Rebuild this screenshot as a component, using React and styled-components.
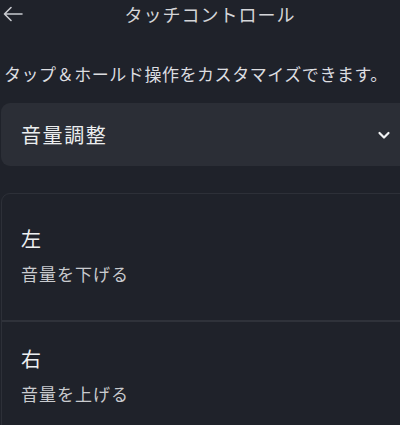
import React from 'react';
import styled, {createGlobalStyle} from 'styled-components';

const GlobalStyle = createGlobalStyle`
	html, body {
		margin: 0;
		padding: 0;
		background: #1f222a;
		overflow: hidden;
	}
	body {
		font-family: "Noto Sans CJK JP", "Noto Sans", sans-serif;
		color: #e2e3e6;
	}
`;

const Page = styled.div`
	width: 400px;
	height: 425px;
	overflow: hidden;
	background: #1f222a;
`;

const Header = styled.div`
	height: 28px;
	display: flex;
	align-items: center;
	justify-content: center;
	position: relative;
	padding-left: 20px;
`;

const BackButton = styled.button`
	position: absolute;
	left: 2px;
	top: 3px;
	padding: 0;
	border: none;
	background: none;
	color: #c8cacf;
	display: flex;
`;

const Title = styled.h1`
	margin: 0;
	font-size: 18px;
	font-weight: 400;
	color: #d4d5d8;
	letter-spacing: 1px;
	line-height: 28px;
`;

const Description = styled.p`
	margin: 33px 0 0 4px;
	font-size: 17px;
	line-height: 26px;
	color: #dcdde0;
	white-space: nowrap;
	letter-spacing: 0.55px;
`;

const Select = styled.div`
	margin: 16px -12px 0 1px;
	height: 63px;
	border-radius: 9px;
	background: #2b2e36;
	display: flex;
	align-items: center;
	padding: 0 21px 0 20px;
	justify-content: space-between;
`;

const SelectLabel = styled.span`
	font-size: 20px;
	color: #eceef0;
	letter-spacing: 1.6px;
`;

const List = styled.div`
	margin: 27px -12px 0 1px;
	padding-top: 8px;
	border: 1px solid #2d3038;
	border-radius: 9px;
`;

const Item = styled.div`
	padding: 24px 20px 34px 19px;
	& + & {
		border-top: 2px solid #2f323a;
	}
`;

const ItemTitle = styled.div`
	font-size: 20px;
	line-height: 26px;
	color: #eef0f2;
`;

const ItemSub = styled.div`
	margin-top: 10px;
	font-size: 17px;
	line-height: 24px;
	color: #c9cbcf;
	letter-spacing: 1px;
`;

const items = [
	{id: 'left', title: '左', sub: '音量を下げる'},
	{id: 'right', title: '右', sub: '音量を上げる'},
];

const App = () => (
	<Page>
		<GlobalStyle />
		<Header>
			<BackButton aria-label="戻る">
				<svg width="22" height="22" viewBox="0 0 22 22" fill="none" stroke="currentColor" strokeWidth="1.6" strokeLinecap="round" strokeLinejoin="round">
					<path d="M20 11H2.5M9 4.5L2.5 11L9 17.5" />
				</svg>
			</BackButton>
			<Title>タッチコントロール</Title>
		</Header>
		<Description>タップ＆ホールド操作をカスタマイズできます。</Description>
		<Select>
			<SelectLabel>音量調整</SelectLabel>
			<svg width="14" height="14" viewBox="0 0 14 14" fill="none" stroke="#f2f3f5" strokeWidth="2.2" strokeLinecap="round" strokeLinejoin="round">
				<path d="M2.5 5l4.5 4.5L11.5 5" />
			</svg>
		</Select>
		<List>
			{items.map(item =>
				<Item key={item.id}>
					<ItemTitle>{item.title}</ItemTitle>
					<ItemSub>{item.sub}</ItemSub>
				</Item>
			)}
		</List>
	</Page>
);

export default App;
